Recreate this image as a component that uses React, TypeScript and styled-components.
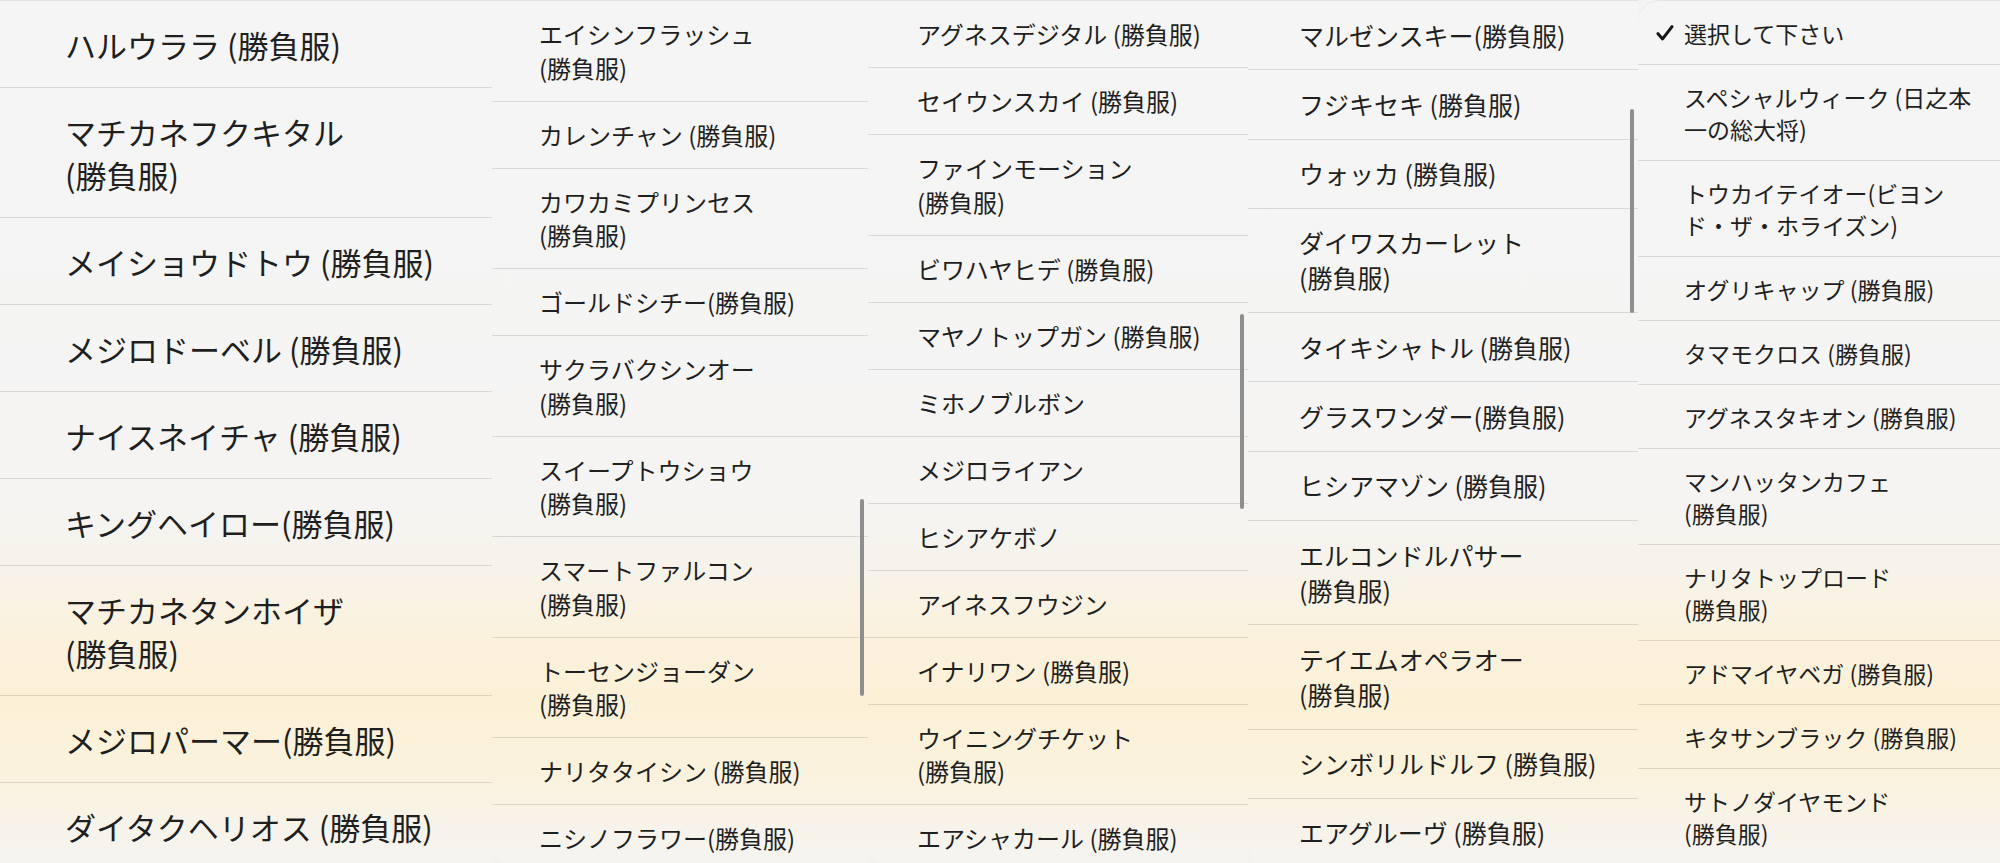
import React from "react";
import styled, { createGlobalStyle } from "styled-components";

const GlobalStyle = createGlobalStyle`
  html, body {
    margin: 0;
    padding: 0;
    width: 2000px;
    height: 863px;
    overflow: hidden;
    background: #f2f2f2;
  }
  body {
    font-family: "Noto Sans CJK JP", "Noto Sans", sans-serif;
    color: #1f1f1f;
  }
`;

type ColumnSpec = {
  width: number;
  fontSize: number;
  lineHeight: number;
  padY: number;
  padLeft: number;
  items: string[];
  checkFirst?: boolean;
  scroll?: { top: number; height: number };
  corner?: "bottomLeft" | "topLeft" | "none";
};

const Page = styled.div`
  display: flex;
  width: 2000px;
  height: 863px;
  overflow: hidden;
  background: linear-gradient(
    180deg,
    #f3f3f3 0%,
    #f3f2f1 58%,
    #f6f1e6 66%,
    #fbefd6 74%,
    #fcefcf 82%,
    #fbf0d6 89%,
    #f6f1e6 96%,
    #f4f2ee 100%
  );
`;

const Column = styled.div<{ $width: number; $corner: string }>`
  position: relative;
  flex: 0 0 ${(p) => p.$width}px;
  width: ${(p) => p.$width}px;
  height: 863px;
  overflow: hidden;
  display: flex;
  flex-direction: column;
  border-top: 1px solid rgba(0, 0, 0, 0.07);
  background: rgba(255, 255, 255, 0.16);
  border-top-left-radius: ${(p) => (p.$corner === "topLeft" ? "22px" : "0")};
  border-bottom-left-radius: ${(p) => (p.$corner === "bottomLeft" ? "18px" : "0")};
`;

const Row = styled.div<{ $fontSize: number; $lineHeight: number; $padY: number; $padLeft: number }>`
  position: relative;
  flex: 0 0 auto;
  padding: ${(p) => p.$padY}px 16px ${(p) => p.$padY}px ${(p) => p.$padLeft}px;
  font-size: ${(p) => p.$fontSize}px;
  line-height: ${(p) => p.$lineHeight}px;
  white-space: pre;
  border-bottom: 1px solid rgba(0, 0, 0, 0.115);
  color: #1f1f1f;
`;

const Check = styled.span`
  position: absolute;
  left: 18px;
  top: 50%;
  transform: translateY(-50%);
  display: flex;
  align-items: center;
`;

const ScrollThumb = styled.div`
  position: absolute;
  right: 4px;
  width: 4px;
  border-radius: 2px;
  background: #8e8e8e;
`;

const columns: ColumnSpec[] = [
  {
    width: 492,
    fontSize: 31,
    lineHeight: 43,
    padY: 21.5,
    padLeft: 65,
    corner: "none",
    items: [
      "ハルウララ (勝負服)",
      "マチカネフクキタル\n(勝負服)",
      "メイショウドトウ (勝負服)",
      "メジロドーベル (勝負服)",
      "ナイスネイチャ (勝負服)",
      "キングヘイロー(勝負服)",
      "マチカネタンホイザ\n(勝負服)",
      "メジロパーマー(勝負服)",
      "ダイタクヘリオス (勝負服)",
    ],
  },
  {
    width: 376,
    fontSize: 24,
    lineHeight: 33.5,
    padY: 16.25,
    padLeft: 47,
    corner: "bottomLeft",
    scroll: { top: 498, height: 197 },
    items: [
      "エイシンフラッシュ\n(勝負服)",
      "カレンチャン (勝負服)",
      "カワカミプリンセス\n(勝負服)",
      "ゴールドシチー(勝負服)",
      "サクラバクシンオー\n(勝負服)",
      "スイープトウショウ\n(勝負服)",
      "スマートファルコン\n(勝負服)",
      "トーセンジョーダン\n(勝負服)",
      "ナリタタイシン (勝負服)",
      "ニシノフラワー(勝負服)",
    ],
  },
  {
    width: 380,
    fontSize: 24,
    lineHeight: 33.5,
    padY: 16.25,
    padLeft: 49,
    corner: "bottomLeft",
    scroll: { top: 313, height: 195 },
    items: [
      "アグネスデジタル (勝負服)",
      "セイウンスカイ (勝負服)",
      "ファインモーション\n(勝負服)",
      "ビワハヤヒデ (勝負服)",
      "マヤノトップガン (勝負服)",
      "ミホノブルボン",
      "メジロライアン",
      "ヒシアケボノ",
      "アイネスフウジン",
      "イナリワン (勝負服)",
      "ウイニングチケット\n(勝負服)",
      "エアシャカール (勝負服)",
    ],
  },
  {
    width: 390,
    fontSize: 25,
    lineHeight: 35,
    padY: 16.65,
    padLeft: 51,
    corner: "bottomLeft",
    scroll: { top: 108, height: 204 },
    items: [
      "マルゼンスキー(勝負服)",
      "フジキセキ (勝負服)",
      "ウォッカ (勝負服)",
      "ダイワスカーレット\n(勝負服)",
      "タイキシャトル (勝負服)",
      "グラスワンダー(勝負服)",
      "ヒシアマゾン (勝負服)",
      "エルコンドルパサー\n(勝負服)",
      "テイエムオペラオー\n(勝負服)",
      "シンボリルドルフ (勝負服)",
      "エアグルーヴ (勝負服)",
    ],
  },
  {
    width: 362,
    fontSize: 23,
    lineHeight: 32,
    padY: 15.5,
    padLeft: 46,
    corner: "topLeft",
    checkFirst: true,
    items: [
      "選択して下さい",
      "スペシャルウィーク (日之本\n一の総大将)",
      "トウカイテイオー(ビヨン\nド・ザ・ホライズン)",
      "オグリキャップ (勝負服)",
      "タマモクロス (勝負服)",
      "アグネスタキオン (勝負服)",
      "マンハッタンカフェ\n(勝負服)",
      "ナリタトップロード\n(勝負服)",
      "アドマイヤベガ (勝負服)",
      "キタサンブラック (勝負服)",
      "サトノダイヤモンド\n(勝負服)",
    ],
  },
];

const CheckIcon = () => (
  <svg width="18" height="17" viewBox="0 0 18 17" fill="none">
    <path d="M2 9.2 6.6 14.4 16 2.2" stroke="#161616" strokeWidth="3" strokeLinecap="round" strokeLinejoin="round" />
  </svg>
);

export default function App() {
  return (
    <>
      <GlobalStyle />
      <Page>
        {columns.map((col, ci) => (
          <Column key={ci} $width={col.width} $corner={col.corner ?? "none"}>
            {col.items.map((text, i) => (
              <Row
                key={i}
                $fontSize={col.fontSize}
                $lineHeight={col.lineHeight}
                $padY={col.padY}
                $padLeft={col.padLeft}
              >
                {col.checkFirst && i === 0 && (
                  <Check>
                    <CheckIcon />
                  </Check>
                )}
                {text}
              </Row>
            ))}
            {col.scroll && (
              <ScrollThumb style={{ top: col.scroll.top, height: col.scroll.height }} />
            )}
          </Column>
        ))}
      </Page>
    </>
  );
}
